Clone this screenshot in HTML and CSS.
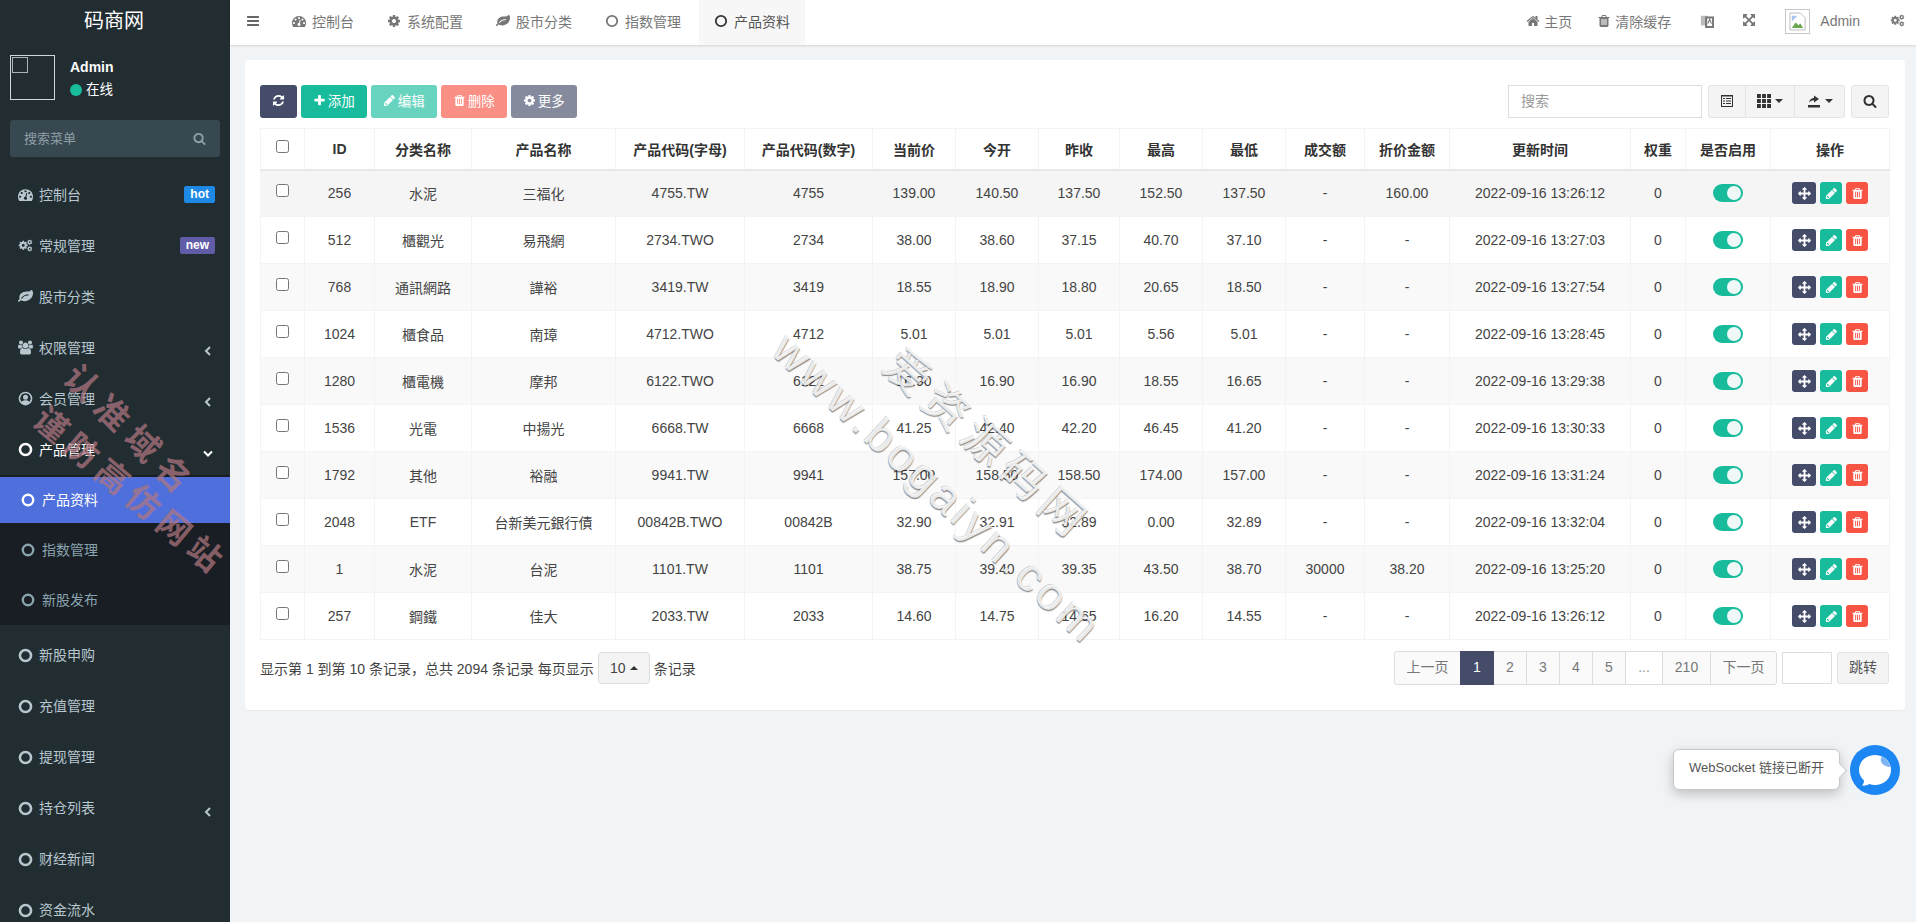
FILE: index.html
```html
<!DOCTYPE html>
<html lang="zh-CN">
<head>
    <meta charset="UTF-8">
    <title>产品资料</title>
    <link rel="stylesheet" href="styles.css">
</head>
<body>

<svg class="defs" xmlns="http://www.w3.org/2000/svg">
    <symbol id="i-bars" viewBox="0 0 1792 1792"><path d="M1664 1344v128q0 26-19 45t-45 19h-1408q-26 0-45-19t-19-45v-128q0-26 19-45t45-19h1408q26 0 45 19t19 45zm0-512v128q0 26-19 45t-45 19h-1408q-26 0-45-19t-19-45v-128q0-26 19-45t45-19h1408q26 0 45 19t19 45zm0-512v128q0 26-19 45t-45 19h-1408q-26 0-45-19t-19-45v-128q0-26 19-45t45-19h1408q26 0 45 19t19 45z"/></symbol>
    <symbol id="i-plus" viewBox="0 0 1792 1792"><path d="M1600 736v192q0 40-28 68t-68 28h-416v416q0 40-28 68t-68 28h-192q-40 0-68-28t-28-68v-416h-416q-40 0-68-28t-28-68v-192q0-40 28-68t68-28h416v-416q0-40 28-68t68-28h192q40 0 68 28t28 68v416h416q40 0 68 28t28 68z"/></symbol>
    <symbol id="i-pencil" viewBox="0 0 1792 1792"><path d="M491 1536l91-91-235-235-91 91v107h128v128h107zm469-1120l416 416-832 832h-416v-416zm683 96q0 53-37 90l-166 166-416-416 166-165q36-38 90-38 53 0 91 38l235 234q37 39 37 91z"/></symbol>
    <symbol id="i-trash" viewBox="0 0 1792 1792"><path d="M704 1376v-704q0-14-9-23t-23-9h-64q-14 0-23 9t-9 23v704q0 14 9 23t23 9h64q14 0 23-9t9-23zm256 0v-704q0-14-9-23t-23-9h-64q-14 0-23 9t-9 23v704q0 14 9 23t23 9h64q14 0 23-9t9-23zm256 0v-704q0-14-9-23t-23-9h-64q-14 0-23 9t-9 23v704q0 14 9 23t23 9h64q14 0 23-9t9-23zm-544-992h448l-48-117q-7-9-17-11h-317q-10 2-17 11zm928 32v64q0 14-9 23t-23 9h-96v948q0 83-47 143.500t-113 60.500h-832q-66 0-113-58.500t-47-141.500v-952h-96q-14 0-23-9t-9-23v-64q0-14 9-23t23-9h309l70-167q15-37 54-63t79-26h320q40 0 79 26t54 63l70 167h309q14 0 23 9t9 23z"/></symbol>
    <symbol id="i-search" viewBox="0 0 1792 1792"><path d="M1216 832q0-185-131.500-316.500t-316.500-131.500-316.500 131.500-131.500 316.500 131.500 316.500 316.500 131.500 316.500-131.500 131.500-316.500zm512 832q0 52-38 90t-90 38q-54 0-90-38l-343-342q-179 124-399 124-143 0-273.500-55.500t-225-150-150-225-55.500-273.500 55.500-273.500 150-225 225-150 273.500-55.500 273.500 55.500 225 150 150 225 55.500 273.500q0 220-124 399l343 343q37 37 37 90z"/></symbol>
    <symbol id="i-home" viewBox="0 0 1792 1792"><path d="M1472 992v480q0 26-19 45t-45 19h-384v-384h-256v384h-384q-26 0-45-19t-19-45v-480q0-1 .5-3t.5-3l575-474 575 474q1 2 1 6zm223-69l-62 74q-8 9-21 11h-3q-13 0-21-7l-692-577-692 577q-12 8-24 7-13-2-21-11l-62-74q-8-10-7-23.500t11-21.500l719-599q32-26 76-26t76 26l244 204v-195q0-14 9-23t23-9h192q14 0 23 9t9 23v408l219 182q10 8 11 21.500t-7 23.500z"/></symbol>
    <symbol id="i-cog" viewBox="0 0 1792 1792"><path d="M1152 896q0-106-75-181t-181-75-181 75-75 181 75 181 181 75 181-75 75-181zm512-109v222q0 12-8 23t-20 13l-185 28q-19 54-39 91 35 50 107 138 10 12 10 25t-9 23q-27 37-99 108t-94 71q-12 0-26-9l-138-108q-44 23-91 38-16 136-29 186-7 28-36 28h-222q-14 0-24.500-8.500t-11.500-21.500l-28-184q-49-16-90-37l-141 107q-10 9-25 9-14 0-25-11-126-114-165-168-7-10-7-23 0-12 8-23 15-21 51-66.500t54-70.500q-27-50-41-99l-183-27q-13-2-21-12.500t-8-23.500v-222q0-12 8-23t19-13l186-28q14-46 39-92-40-57-107-138-10-12-10-24 0-10 9-23 26-36 98.500-107.500t94.500-71.500q13 0 26 10l138 107q44-23 91-38 16-136 29-186 7-28 36-28h222q14 0 24.500 8.500t11.500 21.500l28 184q49 16 90 37l142-107q9-9 24-9 13 0 25 10 129 119 165 170 7 8 7 22 0 12-8 23-15 21-51 66.500t-54 70.500q26 50 41 98l183 28q13 2 21 12.500t8 23.500z"/></symbol>
    <symbol id="i-cogs" viewBox="0 0 1792 1792">
        <use href="#i-cog" x="0" y="250" width="1250" height="1250"/>
        <use href="#i-cog" x="1050" y="150" width="700" height="700"/>
        <use href="#i-cog" x="1050" y="950" width="700" height="700"/>
    </symbol>
    <symbol id="i-refresh" viewBox="0 0 1792 1792"><path d="M1639 1056q0 5-1 7-64 268-268 434.500t-478 166.500q-146 0-282.500-55t-243.500-157l-129 129q-19 19-45 19t-45-19-19-45v-448q0-26 19-45t45-19h448q26 0 45 19t19 45-19 45l-137 137q71 66 161 102t187 36q134 0 250-65t186-179q11-17 53-117 8-23 30-23h192q13 0 22.500 9.500t9.500 22.500zm25-800v448q0 26-19 45t-45 19h-448q-26 0-45-19t-19-45 19-45l138-138q-148-137-349-137-134 0-250 65t-186 179q-11 17-53 117-8 23-30 23h-199q-13 0-22.500-9.500t-9.500-22.500v-7q65-268 270-434.500t480-166.500q146 0 284 55.500t245 156.500l130-129q19-19 45-19t45 19 19 45z"/></symbol>
    <symbol id="i-move" viewBox="0 0 1792 1792"><path d="M1792 896q0 26-19 45l-256 256q-19 19-45 19t-45-19-19-45v-128h-384v384h128q26 0 45 19t19 45-19 45l-256 256q-19 19-45 19t-45-19l-256-256q-19-19-19-45t19-45 45-19h128v-384h-384v128q0 26-19 45t-45 19-45-19l-256-256q-19-19-19-45t19-45l256-256q19-19 45-19t45 19 19 45v128h384v-384h-128q-26 0-45-19t-19-45 19-45l256-256q19-19 45-19t45 19l256 256q19 19 19 45t-19 45-45 19h-128v384h384v-128q0-26 19-45t45-19 45 19l256 256q19 19 19 45z"/></symbol>
    <symbol id="i-expand" viewBox="0 0 1792 1792"><path d="M1283 413l-355 355 355 355 144-144q29-31 70-14 39 17 39 59v448q0 26-19 45t-45 19h-448q-42 0-59-40-17-39 14-69l144-144-355-355-355 355 144 144q31 30 14 69-17 40-59 40h-448q-26 0-45-19t-19-45v-448q0-42 40-59 39-17 69 14l144 144 355-355-355-355-144 144q-19 19-45 19-12 0-24-5-40-17-40-59v-448q0-26 19-45t45-19h448q42 0 59 40 17 39-14 69l-144 144 355 355 355-355-144-144q-31-30-14-69 17-40 59-40h448q26 0 45 19t19 45v448q0 42-39 59-13 5-25 5-26 0-45-19z"/></symbol>
    <symbol id="i-dash" viewBox="0 0 1792 1792"><path d="M384 1152q0-53-37.500-90.500t-90.500-37.500-90.500 37.500-37.500 90.500 37.500 90.500 90.500 37.500 90.500-37.500 37.500-90.500zm192-448q0-53-37.500-90.500t-90.500-37.500-90.500 37.500-37.500 90.500 37.500 90.500 90.500 37.500 90.500-37.500 37.500-90.500zm428 481l101-382q6-26-7.500-48.500t-38.500-29.500-48 6.500-30 39.500l-101 382q-60 5-107 43.500t-63 98.500q-20 77 20 146t117 89 146-20 89-117q16-60-6-117t-72-91zm660-33q0-53-37.500-90.500t-90.500-37.500-90.500 37.500-37.500 90.500 37.500 90.500 90.500 37.500 90.500-37.500 37.500-90.500zm-640-640q0-53-37.500-90.500t-90.500-37.500-90.500 37.500-37.500 90.500 37.500 90.500 90.500 37.500 90.500-37.500 37.500-90.500zm448 192q0-53-37.500-90.500t-90.500-37.500-90.500 37.500-37.500 90.500 37.500 90.500 90.500 37.500 90.500-37.500 37.500-90.500zm320 448q0 261-141 483-19 29-54 29h-1402q-35 0-54-29-141-221-141-483 0-182 71-348t191-286 286-191 348-71 348 71 286 191 191 286 71 348z"/></symbol>
    <symbol id="i-leaf" viewBox="0 0 1792 1792"><path d="M1280 704q0-26-19-45t-45-19q-172 0-318 49.500t-259.500 134-235.500 219.500q-19 21-19 45 0 26 19 45t45 19q24 0 45-19 27-24 74-71t67-66q137-124 268.500-176t313.500-52q26 0 45-19t19-45zm512-198q0 95-20 193-46 224-184.500 383t-357.500 268q-214 108-438 108-148 0-286-47-15-5-88-42t-96-37q-16 0-39.500 32t-45 70-52.500 70-60 32q-30 0-51-11t-31-24-27-42q-2-4-6-11t-5.500-10-3-9.500-1.500-13.500q0-35 31-73.500t68-65.500 68-56 31-48q0-4-14-38t-16-44q-9-51-9-104 0-115 43.500-220t119-184.500 170.500-139 204-95.500q55-18 145-25.500t179.500-9 178.500-6 163.500-24 113.500-56.500l29.500-29.500 29.500-28 27-20 36.500-16 43.500-4.500q39 0 70.500 46t47.500 112 24 124 8 96z"/></symbol>
    <symbol id="i-users" viewBox="0 0 1920 1792"><path d="M593 896q-162 5-265 128h-134q-82 0-138-40.500t-56-118.500q0-353 124-353 6 0 43.500 21t97.500 42.500 119 21.500q67 0 133-23-5 37-5 66 0 139 81 256zm1071 637q0 120-73 189.500t-194 69.500h-874q-121 0-194-69.500t-73-189.500q0-53 3.500-103.500t14-109 26.500-108.500 43-97.500 62-81 85.500-53.500 111.500-20q10 0 43 21.500t73 48 107 48 135 21.500 135-21.500 107-48 73-48 43-21.500q61 0 111.500 20t85.500 53.500 62 81 43 97.500 26.500 108.500 14 109 3.500 103.500zm-1024-1277q0 106-75 181t-181 75-181-75-75-181 75-181 181-75 181 75 75 181zm704 384q0 159-112.500 271.500t-271.500 112.500-271.500-112.500-112.500-271.500 112.500-271.500 271.500-112.500 271.500 112.500 112.500 271.500zm576 225q0 78-56 118.500t-138 40.500h-134q-103-123-265-128 81-117 81-256 0-29-5-66 66 23 133 23 59 0 119-21.500t97.500-42.500 43.500-21q124 0 124 353zm-128-609q0 106-75 181t-181 75-181-75-75-181 75-181 181-75 181 75 75 181z"/></symbol>
    <symbol id="i-user" viewBox="0 0 24 24"><path fill-rule="evenodd" d="M12 1a11 11 0 1 0 0 22 11 11 0 0 0 0-22zm0 2.500a8.500 8.500 0 0 1 6.700 13.700c-1.500-1.700-3.900-2.600-6.700-2.600s-5.200.9-6.700 2.600A8.500 8.500 0 0 1 12 3.500zm0 2.500a4 4 0 1 0 0 8 4 4 0 0 0 0-8z"/></symbol>
    <symbol id="i-circle" viewBox="0 0 14 14"><circle cx="7" cy="7" r="5.200" fill="none" stroke="currentColor"/></symbol>
    <symbol id="i-left" viewBox="0 0 10 14"><path d="M7 3L3 7l4 4" fill="none" stroke="currentColor" stroke-width="2"/></symbol>
    <symbol id="i-down" viewBox="0 0 14 10"><path d="M3 2.500l4 4 4-4" fill="none" stroke="currentColor" stroke-width="2"/></symbol>
    <symbol id="i-lang" viewBox="0 0 16 16"><path d="M1 2h8v11H1z" opacity=".5"/><path d="M7 4h8v11H7z" fill="#fff" stroke="currentColor"/><path d="M9 11l2-5 2 5" fill="none" stroke="currentColor" stroke-width="1.300"/></symbol>
    <symbol id="i-list" viewBox="0 0 14 14"><path fill-rule="evenodd" d="M1 1h12v12H1zm1 1.500v9.500h10V2.500zM3 4h2v1H3zm3 0h5v1H6zM3 6.500h2v1H3zm3 0h5v1H6zM3 9h2v1H3zm3 0h5v1H6z"/></symbol>
    <symbol id="i-th" viewBox="0 0 13 13"><path d="M0 0h3.600v3.600H0zm4.700 0h3.600v3.600H4.700zm4.700 0H13v3.600H9.400zM0 4.700h3.600v3.600H0zm4.700 0h3.600v3.600H4.700zm4.700 0H13v3.600H9.400zM0 9.400h3.600V13H0zm4.700 0h3.600V13H4.700zm4.700 0H13V13H9.400z"/></symbol>
    <symbol id="i-export" viewBox="0 0 14 14"><path d="M1 11h12v2.500H1zM2 8.500C2.500 5.500 4.500 4 7 4V1.500L12 5 7 8.500V6.300C5 6.300 3.500 7 2 8.500z"/></symbol>
</svg>

<aside class="sidebar">
    <div class="logo">码商网</div>
    <div class="user-panel">
        <div class="user-pic"><span></span></div>
        <div class="user-info">
            <b>Admin</b>
            <div class="user-status"><i></i>在线</div>
        </div>
    </div>
    <div class="side-search">
        <span>搜索菜单</span>
        <svg class="ic"><use href="#i-search"/></svg>
    </div>
    <ul class="side-menu">
        <li class="side-item"><svg class="ic"><use href="#i-dash"/></svg><span>控制台</span><em class="badge badge-hot">hot</em></li>
        <li class="side-item"><svg class="ic"><use href="#i-cogs"/></svg><span>常规管理</span><em class="badge badge-new">new</em></li>
        <li class="side-item"><svg class="ic"><use href="#i-leaf"/></svg><span>股市分类</span></li>
        <li class="side-item"><svg class="ic"><use href="#i-users"/></svg><span>权限管理</span><svg class="arrow"><use href="#i-left"/></svg></li>
        <li class="side-item"><svg class="ic"><use href="#i-user"/></svg><span>会员管理</span><svg class="arrow"><use href="#i-left"/></svg></li>
        <li class="side-item open"><svg class="ic"><use href="#i-circle"/></svg><span>产品管理</span><svg class="arrow"><use href="#i-down"/></svg></li>
        <li>
            <ul class="sub-menu">
                <li class="sub-item active"><svg class="ic"><use href="#i-circle"/></svg><span>产品资料</span></li>
                <li class="sub-item"><svg class="ic"><use href="#i-circle"/></svg><span>指数管理</span></li>
                <li class="sub-item"><svg class="ic"><use href="#i-circle"/></svg><span>新股发布</span></li>
            </ul>
        </li>
        <li class="side-item"><svg class="ic"><use href="#i-circle"/></svg><span>新股申购</span></li>
        <li class="side-item"><svg class="ic"><use href="#i-circle"/></svg><span>充值管理</span></li>
        <li class="side-item"><svg class="ic"><use href="#i-circle"/></svg><span>提现管理</span></li>
        <li class="side-item"><svg class="ic"><use href="#i-circle"/></svg><span>持仓列表</span><svg class="arrow"><use href="#i-left"/></svg></li>
        <li class="side-item"><svg class="ic"><use href="#i-circle"/></svg><span>财经新闻</span></li>
        <li class="side-item"><svg class="ic"><use href="#i-circle"/></svg><span>资金流水</span></li>
    </ul>
</aside>

<div class="main">
    <header class="topbar">
        <svg class="ic burger"><use href="#i-bars"/></svg>
        <div class="tabs">
            <div class="tab"><svg class="ic"><use href="#i-dash"/></svg>控制台</div>
            <div class="tab"><svg class="ic"><use href="#i-cog"/></svg>系统配置</div>
            <div class="tab"><svg class="ic"><use href="#i-leaf"/></svg>股市分类</div>
            <div class="tab"><svg class="ic"><use href="#i-circle"/></svg>指数管理</div>
            <div class="tab current"><svg class="ic"><use href="#i-circle"/></svg>产品资料</div>
        </div>
        <div class="top-right">
            <div class="top-link link-home"><svg class="ic"><use href="#i-home"/></svg>主页</div>
            <div class="top-link link-clear"><svg class="ic"><use href="#i-trash"/></svg>清除缓存</div>
            <svg class="ic top-icon"><use href="#i-lang"/></svg>
            <svg class="ic top-icon icon-expand"><use href="#i-expand"/></svg>
            <div class="top-avatar">
                <svg viewBox="0 0 18 20"><path d="M1 1h11l5 5v13H1z" fill="#fff" stroke="#bbb"/><path d="M3 17l4-6 3 3 2-2 3 5z" fill="#6aa84f"/><path d="M3 10V4h6z" fill="#a9c4ee"/></svg>
            </div>
            <div class="top-name">Admin</div>
            <svg class="ic top-gear"><use href="#i-cogs"/></svg>
        </div>
    </header>

    <div class="content">
        <div class="panel">
            <div class="toolbar">
                <button class="btn btn-dark btn-icon"><svg class="ic"><use href="#i-refresh"/></svg></button>
                <button class="btn btn-green"><svg class="ic"><use href="#i-plus"/></svg>添加</button>
                <button class="btn btn-green faded"><svg class="ic"><use href="#i-pencil"/></svg>编辑</button>
                <button class="btn btn-red faded"><svg class="ic"><use href="#i-trash"/></svg>删除</button>
                <button class="btn btn-dark faded"><svg class="ic"><use href="#i-cog"/></svg>更多</button>
                <div class="toolbar-right">
                    <div class="search-input">搜索</div>
                    <div class="btn-group">
                        <button class="tool tool-list"><svg class="ic"><use href="#i-list"/></svg></button>
                        <button class="tool tool-th"><svg class="ic"><use href="#i-th"/></svg><i class="caret"></i></button>
                        <button class="tool tool-exp"><svg class="ic"><use href="#i-export"/></svg><i class="caret"></i></button>
                    </div>
                    <button class="tool tool-search"><svg class="ic"><use href="#i-search"/></svg></button>
                </div>
            </div>

            <table class="grid">
                <colgroup>
                    <col class="c-check"><col class="c-id"><col class="c-cat"><col class="c-name"><col class="c-code"><col class="c-num">
                    <col class="c-p1"><col class="c-p2"><col class="c-p3"><col class="c-p1"><col class="c-p1"><col class="c-vol"><col class="c-disc">
                    <col class="c-time"><col class="c-weight"><col class="c-on"><col class="c-act">
                </colgroup>
                <thead>
                    <tr>
                        <th><input type="checkbox"></th><th>ID</th><th>分类名称</th><th>产品名称</th><th>产品代码(字母)</th><th>产品代码(数字)</th>
                        <th>当前价</th><th>今开</th><th>昨收</th><th>最高</th><th>最低</th><th>成交额</th><th>折价金额</th><th>更新时间</th><th>权重</th><th>是否启用</th><th>操作</th>
                    </tr>
                </thead>
                <tbody>
                    <tr class="hover">
                        <td><input type="checkbox"></td><td>256</td><td>水泥</td><td>三福化</td><td>4755.TW</td><td>4755</td>
                        <td>139.00</td><td>140.50</td><td>137.50</td><td>152.50</td><td>137.50</td><td>-</td><td>160.00</td><td>2022-09-16 13:26:12</td><td>0</td>
                        <td><span class="switch"></span></td>
                        <td><div class="acts"><span class="act act-move"><svg><use href="#i-move"/></svg></span><span class="act act-edit"><svg><use href="#i-pencil"/></svg></span><span class="act act-del"><svg><use href="#i-trash"/></svg></span></div></td>
                    </tr>
                    <tr>
                        <td><input type="checkbox"></td><td>512</td><td>櫃觀光</td><td>易飛網</td><td>2734.TWO</td><td>2734</td>
                        <td>38.00</td><td>38.60</td><td>37.15</td><td>40.70</td><td>37.10</td><td>-</td><td>-</td><td>2022-09-16 13:27:03</td><td>0</td>
                        <td><span class="switch"></span></td>
                        <td><div class="acts"><span class="act act-move"><svg><use href="#i-move"/></svg></span><span class="act act-edit"><svg><use href="#i-pencil"/></svg></span><span class="act act-del"><svg><use href="#i-trash"/></svg></span></div></td>
                    </tr>
                    <tr>
                        <td><input type="checkbox"></td><td>768</td><td>通訊網路</td><td>譁裕</td><td>3419.TW</td><td>3419</td>
                        <td>18.55</td><td>18.90</td><td>18.80</td><td>20.65</td><td>18.50</td><td>-</td><td>-</td><td>2022-09-16 13:27:54</td><td>0</td>
                        <td><span class="switch"></span></td>
                        <td><div class="acts"><span class="act act-move"><svg><use href="#i-move"/></svg></span><span class="act act-edit"><svg><use href="#i-pencil"/></svg></span><span class="act act-del"><svg><use href="#i-trash"/></svg></span></div></td>
                    </tr>
                    <tr>
                        <td><input type="checkbox"></td><td>1024</td><td>櫃食品</td><td>南璋</td><td>4712.TWO</td><td>4712</td>
                        <td>5.01</td><td>5.01</td><td>5.01</td><td>5.56</td><td>5.01</td><td>-</td><td>-</td><td>2022-09-16 13:28:45</td><td>0</td>
                        <td><span class="switch"></span></td>
                        <td><div class="acts"><span class="act act-move"><svg><use href="#i-move"/></svg></span><span class="act act-edit"><svg><use href="#i-pencil"/></svg></span><span class="act act-del"><svg><use href="#i-trash"/></svg></span></div></td>
                    </tr>
                    <tr>
                        <td><input type="checkbox"></td><td>1280</td><td>櫃電機</td><td>摩邦</td><td>6122.TWO</td><td>6122</td>
                        <td>16.90</td><td>16.90</td><td>16.90</td><td>18.55</td><td>16.65</td><td>-</td><td>-</td><td>2022-09-16 13:29:38</td><td>0</td>
                        <td><span class="switch"></span></td>
                        <td><div class="acts"><span class="act act-move"><svg><use href="#i-move"/></svg></span><span class="act act-edit"><svg><use href="#i-pencil"/></svg></span><span class="act act-del"><svg><use href="#i-trash"/></svg></span></div></td>
                    </tr>
                    <tr>
                        <td><input type="checkbox"></td><td>1536</td><td>光電</td><td>中揚光</td><td>6668.TW</td><td>6668</td>
                        <td>41.25</td><td>42.40</td><td>42.20</td><td>46.45</td><td>41.20</td><td>-</td><td>-</td><td>2022-09-16 13:30:33</td><td>0</td>
                        <td><span class="switch"></span></td>
                        <td><div class="acts"><span class="act act-move"><svg><use href="#i-move"/></svg></span><span class="act act-edit"><svg><use href="#i-pencil"/></svg></span><span class="act act-del"><svg><use href="#i-trash"/></svg></span></div></td>
                    </tr>
                    <tr>
                        <td><input type="checkbox"></td><td>1792</td><td>其他</td><td>裕融</td><td>9941.TW</td><td>9941</td>
                        <td>157.00</td><td>158.50</td><td>158.50</td><td>174.00</td><td>157.00</td><td>-</td><td>-</td><td>2022-09-16 13:31:24</td><td>0</td>
                        <td><span class="switch"></span></td>
                        <td><div class="acts"><span class="act act-move"><svg><use href="#i-move"/></svg></span><span class="act act-edit"><svg><use href="#i-pencil"/></svg></span><span class="act act-del"><svg><use href="#i-trash"/></svg></span></div></td>
                    </tr>
                    <tr>
                        <td><input type="checkbox"></td><td>2048</td><td>ETF</td><td>台新美元銀行債</td><td>00842B.TWO</td><td>00842B</td>
                        <td>32.90</td><td>32.91</td><td>32.89</td><td>0.00</td><td>32.89</td><td>-</td><td>-</td><td>2022-09-16 13:32:04</td><td>0</td>
                        <td><span class="switch"></span></td>
                        <td><div class="acts"><span class="act act-move"><svg><use href="#i-move"/></svg></span><span class="act act-edit"><svg><use href="#i-pencil"/></svg></span><span class="act act-del"><svg><use href="#i-trash"/></svg></span></div></td>
                    </tr>
                    <tr>
                        <td><input type="checkbox"></td><td>1</td><td>水泥</td><td>台泥</td><td>1101.TW</td><td>1101</td>
                        <td>38.75</td><td>39.40</td><td>39.35</td><td>43.50</td><td>38.70</td><td>30000</td><td>38.20</td><td>2022-09-16 13:25:20</td><td>0</td>
                        <td><span class="switch"></span></td>
                        <td><div class="acts"><span class="act act-move"><svg><use href="#i-move"/></svg></span><span class="act act-edit"><svg><use href="#i-pencil"/></svg></span><span class="act act-del"><svg><use href="#i-trash"/></svg></span></div></td>
                    </tr>
                    <tr>
                        <td><input type="checkbox"></td><td>257</td><td>鋼鐵</td><td>佳大</td><td>2033.TW</td><td>2033</td>
                        <td>14.60</td><td>14.75</td><td>14.65</td><td>16.20</td><td>14.55</td><td>-</td><td>-</td><td>2022-09-16 13:26:12</td><td>0</td>
                        <td><span class="switch"></span></td>
                        <td><div class="acts"><span class="act act-move"><svg><use href="#i-move"/></svg></span><span class="act act-edit"><svg><use href="#i-pencil"/></svg></span><span class="act act-del"><svg><use href="#i-trash"/></svg></span></div></td>
                    </tr>
                </tbody>
            </table>

            <div class="table-foot">
                <div class="foot-info">
                    显示第 1 到第 10 条记录，总共 2094 条记录 每页显示
                    <span class="page-size">10<i class="caret-up"></i></span>
                    条记录
                </div>
                <div class="foot-pages">
                    <ul class="pager">
                        <li class="p-word">上一页</li>
                        <li class="p-on">1</li>
                        <li>2</li>
                        <li>3</li>
                        <li>4</li>
                        <li>5</li>
                        <li class="p-dots">...</li>
                        <li class="p-last">210</li>
                        <li class="p-word">下一页</li>
                    </ul>
                    <div class="jump-input"></div>
                    <div class="jump-btn">跳转</div>
                </div>
            </div>
        </div>
    </div>
</div>

<!-- floating stuff over the page -->
<div class="ws-tip">WebSocket 链接已断开</div>
<div class="ws-ball">
    <svg viewBox="0 0 50 50">
        <circle cx="25" cy="25" r="25" fill="#1c86f2"/>
        <path d="M25 10c9 0 16 6.500 16 15s-7 15-16 15c-2 0-4-.3-5.800-1-1.700 1.300-4.500 2-7.200 1.500 1.300-1.300 2-3 2-5-3-2.700-5-6.300-5-10.500 0-8.500 7-15 16-15z" fill="#fff"/>
        <path d="M32 11.500c-1.200 1.200-1.500 3-1 5 .8 2.500 4 5 8 5.500 .6-.3 1.200-.3 1.500-.3-1-4.600-4.300-8.300-8.500-10.200z" fill="#7fb4f3"/>
    </svg>
</div>

<div class="mark mark-a">认准域名</div>
<div class="mark mark-b">谨防高仿网站</div>
<div class="mark mark-url">www.bogaiyn.com</div>
<div class="mark mark-name">爱资源码网</div>

</body>
</html>
```

FILE: styles.css
```css
* {
    box-sizing: border-box;
}
html, body {
    height: 100%;
}
body {
    margin: 0;
    display: flex;
    height: 922px;
    overflow: hidden;
    position: relative;
    background: #f1f4f6;
    color: #444;
    font-family: "Liberation Sans", "Noto Sans CJK SC", sans-serif;
    font-size: 14px;
}
ul {
    list-style: none;
    margin: 0;
    padding: 0;
}
.defs {
    display: none;
}
.ic {
    width: 14px;
    height: 14px;
    fill: currentColor;
    flex: none;
    stroke-width: 2.400;
}

/* sidebar */
.sidebar {
    width: 230px;
    flex: none;
    height: 922px;
    overflow: hidden;
    background: #222d32;
    color: #b8c7ce;
}
.logo {
    height: 45px;
    padding-top: 6px;
    line-height: 30px;
    text-align: center;
    color: #fff;
    font-size: 20px;
    margin-left: -2px;
}
.user-panel {
    display: flex;
    padding: 10px 10px 0;
    height: 65px;
}
.user-pic {
    width: 45px;
    height: 45px;
    border: 1px solid #d2d6d8;
    padding: 1px;
}
.user-pic span {
    display: block;
    width: 16px;
    height: 16px;
    border: 1px solid #aab2b5;
}
.user-info {
    margin-left: 15px;
    color: #fff;
    padding-top: 2px;
    line-height: 20px;
}
.user-status {
    display: flex;
    align-items: center;
    margin-top: 3px;
    font-size: 13.500px;
}
.user-status i {
    width: 12px;
    height: 12px;
    border-radius: 50%;
    background: #18bc9c;
    margin-right: 4px;
}
.side-search {
    margin: 10px 10px 0;
    height: 37px;
    display: flex;
    align-items: center;
    justify-content: space-between;
    padding: 0 14px;
    background: #374850;
    border-radius: 3px;
    color: #8f9fa6;
    font-size: 13px;
}
.side-search span {
    padding-bottom: 2px;
}
.side-search .ic {
    width: 13px;
    height: 13px;
}
.side-menu {
    margin-top: 12px;
}
.side-item {
    height: 51px;
    display: flex;
    align-items: center;
    padding: 0 15px 0 18px;
    position: relative;
}
.side-item span, .sub-item span {
    padding-bottom: 2px;
}
.side-item .ic {
    width: 15px;
    height: 15px;
    margin-right: 6px;
}
.side-item.open {
    color: #fff;
}
.badge {
    margin-left: auto;
    font-style: normal;
    font-weight: bold;
    font-size: 12px;
    color: #fff;
    height: 17px;
    line-height: 17px;
    padding: 0 6px;
    border-radius: 2px;
}
.badge-hot {
    background: #1e88e5;
}
.badge-new {
    background: #605ca8;
}
.arrow {
    position: absolute;
    right: 17px;
    top: 22px;
    width: 10px;
    height: 14px;
}
.side-item.open .arrow {
    right: 15px;
    width: 14px;
    height: 10px;
    top: 25px;
}
.sub-menu {
    background: #181e23;
    padding-top: 1px;
    margin-bottom: 4.500px;
}
.sub-item {
    height: 50px;
    display: flex;
    align-items: center;
    padding-left: 21px;
    color: #8aa4af;
}
.sub-item .ic {
    width: 14px;
    height: 14px;
    margin-right: 7px;
}
.sub-item.active {
    height: 46px;
    margin: 1px 0 2px;
    background: #4e6fdc;
    color: #fff;
}

/* top bar */
.main {
    flex: 1;
    min-width: 0;
}
.topbar {
    height: 45px;
    padding-bottom: 4px;
    background: #fff;
    display: flex;
    align-items: center;
    box-shadow: 0 1px 2px rgba(0, 0, 0, 0.12);
    position: relative;
    color: #777;
}
.burger {
    margin-left: 16px;
    margin-right: 17px;
    color: #666;
}
.tabs {
    display: flex;
    gap: 3px;
    height: 45px;
    align-self: flex-start;
}
.tab {
    display: flex;
    align-items: center;
    padding: 0 15px 4px;
}
.tab .ic {
    margin-right: 6px;
    stroke-width: 1.800;
}
.tab.current {
    background: #f7f7f7;
    color: #555;
}
.tab.current .ic {
    color: #333;
}
.top-right {
    margin-left: auto;
    display: flex;
    align-items: center;
    padding-right: 11px;
}
.top-link {
    display: flex;
    align-items: center;
}
.top-link .ic {
    margin-right: 4px;
}
.link-clear {
    margin-left: 25px;
}
.top-icon {
    margin-left: 29px;
}
.icon-expand {
    margin-left: 29px;
}
.top-avatar {
    width: 25px;
    height: 25px;
    margin-left: 28px;
    margin-top: 2px;
    border: 1px solid #c4c8ca;
    padding: 2px 3px;
}
.top-avatar svg {
    display: block;
    width: 17px;
    height: 19px;
}
.top-name {
    margin-left: 10px;
    color: #777;
}
.top-gear {
    margin-left: 30px;
    width: 15px;
    height: 15px;
}

/* panel */
.content {
    padding: 15px 11px 15px 15px;
}
.panel {
    background: #fff;
    border-radius: 4px;
    height: 650px;
    padding: 25px 16px 0 15px;
    box-shadow: 0 1px 1px rgba(0, 0, 0, 0.04);
}
.toolbar {
    display: flex;
    height: 33px;
    gap: 3.500px;
    margin-bottom: 10px;
}
.btn {
    border: 0;
    border-radius: 3px;
    height: 33px;
    width: 66.500px;
    color: #fff;
    font: inherit;
    font-size: 13.500px;
    display: flex;
    align-items: center;
    justify-content: center;
    padding: 0 0 3px;
}
.btn .ic {
    width: 13px;
    height: 13px;
    margin-right: 2px;
}
.btn-icon {
    width: 37px;
}
.btn-icon .ic {
    margin: 0;
}
.btn-dark {
    background: #444c69;
}
.btn-green {
    background: #18bc9c;
}
.btn-red {
    background: #f75444;
}
.faded {
    opacity: 0.65;
}
.toolbar-right {
    margin-left: auto;
    display: flex;
    gap: 6px;
}
.search-input {
    width: 194px;
    height: 33px;
    line-height: 31px;
    border: 1px solid #ddd;
    padding-left: 12px;
    color: #999;
}
.btn-group {
    display: flex;
}
.tool {
    height: 33px;
    background: #f4f4f4;
    border: 1px solid #e4e4e4;
    color: #333;
    padding: 0 0 2px;
    display: flex;
    align-items: center;
    justify-content: center;
}
.tool-list {
    width: 38px;
    border-radius: 3px 0 0 3px;
}
.tool-th {
    width: 49px;
    border-left: 0;
}
.tool-exp {
    width: 50px;
    border-left: 0;
    border-radius: 0 3px 3px 0;
}
.tool-search {
    width: 38px;
    border-radius: 3px;
}
.caret {
    width: 0;
    height: 0;
    margin-left: 4px;
    border-top: 4px solid #333;
    border-left: 4px solid transparent;
    border-right: 4px solid transparent;
}

/* table */
.grid {
    width: 1629px;
    table-layout: fixed;
    border-collapse: collapse;
    color: #444;
}
.c-check { width: 44px; }
.c-id { width: 70px; }
.c-cat { width: 97px; }
.c-name { width: 144px; }
.c-code { width: 129px; }
.c-num { width: 128px; }
.c-p1 { width: 83px; }
.c-p2 { width: 83px; }
.c-p3 { width: 81px; }
.c-vol { width: 79px; }
.c-disc { width: 85px; }
.c-time { width: 181px; }
.c-weight { width: 55px; }
.c-on { width: 85px; }
.c-act { width: 119px; }
.grid th, .grid td {
    border: 1px solid #f4f4f4;
    text-align: center;
    padding: 0;
    vertical-align: middle;
    white-space: nowrap;
}
.grid th {
    height: 41px;
    color: #333;
    font-weight: bold;
    border-bottom: 2px solid #e6e8e9;
}
.grid td {
    height: 47px;
}
.grid tbody tr:nth-child(odd) {
    background: #f9f9f9;
}
.grid tbody tr.hover {
    background: #f5f5f5;
}
.grid input {
    display: block;
    margin: -5px auto 0 15px;
    width: 13px;
    height: 13px;
}
.switch {
    display: block;
    width: 30px;
    height: 18px;
    margin: 0 auto;
    border-radius: 9px;
    background: #18bc9c;
    position: relative;
}
.switch::after {
    content: "";
    position: absolute;
    right: 2px;
    top: 2px;
    width: 14px;
    height: 14px;
    border-radius: 50%;
    background: #eef8f6;
}
.acts {
    display: flex;
    justify-content: center;
    gap: 4px;
}
.act {
    width: 22px;
    height: 22px;
    border-radius: 3px;
    display: flex;
    align-items: center;
    justify-content: center;
    color: #fff;
}
.act svg {
    width: 13px;
    height: 13px;
    fill: currentColor;
}
.act-move {
    width: 24px;
    background: #444c69;
}
.act-edit {
    background: #18bc9c;
}
.act-del {
    background: #f75444;
}

/* table footer */
.table-foot {
    display: flex;
    justify-content: space-between;
    margin-top: 11px;
}
.foot-info {
    display: flex;
    align-items: center;
    gap: 4px;
    height: 34px;
    color: #444;
}
.page-size {
    width: 52px;
    height: 32px;
    display: flex;
    align-items: center;
    justify-content: center;
    background: #f4f4f4;
    border: 1px solid #ddd;
    border-radius: 3px;
    color: #444;
    font-size: 14px;
}
.caret-up {
    width: 0;
    height: 0;
    margin-left: 4px;
    border-bottom: 4px solid #333;
    border-left: 4px solid transparent;
    border-right: 4px solid transparent;
}
.foot-pages {
    display: flex;
    align-items: center;
    height: 34px;
}
.pager {
    display: flex;
    height: 34px;
    color: #777;
    border: 1px solid #ddd;
    border-radius: 3px;
    background: #fafafa;
}
.pager li {
    width: 33px;
    line-height: 30px;
    text-align: center;
    border-right: 1px solid #ddd;
}
.pager .p-word {
    width: 65px;
    border-right: 0;
}
.pager .p-on {
    width: 34px;
    margin: -1px 0;
    height: 34px;
    line-height: 32px;
    background: #444c69;
    color: #fff;
    border-right: 0;
}
.pager .p-dots {
    width: 37px;
    background: #fff;
    color: #999;
}
.pager .p-last {
    width: 48px;
}
.jump-input {
    width: 50px;
    height: 32px;
    margin-left: 5px;
    border: 1px solid #ddd;
    background: #fff;
}
.jump-btn {
    width: 52px;
    height: 32px;
    line-height: 28px;
    margin-left: 5px;
    text-align: center;
    background: #f4f4f4;
    border: 1px solid #e4e4e4;
    border-radius: 3px;
    color: #555;
}

/* websocket tip */
.ws-tip {
    position: absolute;
    left: 1673px;
    top: 749px;
    width: 167px;
    height: 41px;
    line-height: 36px;
    text-align: center;
    font-size: 13px;
    color: #555;
    background: #fff;
    border: 1px solid #c6c9cb;
    border-radius: 6px;
    box-shadow: 0 4px 12px rgba(0, 0, 0, 0.22);
}
.ws-tip::after {
    content: "";
    position: absolute;
    right: -6px;
    top: 15px;
    width: 10px;
    height: 10px;
    background: #fff;
    border-top: 1px solid #c6c9cb;
    border-right: 1px solid #c6c9cb;
    transform: rotate(45deg);
}
.ws-ball {
    position: absolute;
    left: 1850px;
    top: 745px;
    width: 50px;
    height: 50px;
}
.ws-ball svg {
    display: block;
}

/* watermarks */
.mark {
    position: absolute;
    white-space: nowrap;
    pointer-events: none;
    transform: translate(-50%, -50%) rotate(42deg);
}
.mark-a, .mark-b {
    color: rgba(176, 118, 128, 0.72);
    font-weight: bold;
}
.mark-a {
    left: 132px;
    top: 430px;
    font-size: 34px;
    letter-spacing: 9px;
    transform: translate(-50%, -50%) rotate(45deg);
}
.mark-b {
    left: 132px;
    top: 490px;
    font-size: 33px;
    letter-spacing: 7px;
    transform: translate(-50%, -50%) rotate(40deg);
}
.mark-url, .mark-name {
    color: rgba(255, 255, 255, 0.86);
    text-shadow: 1px 1px 1px rgba(0, 0, 0, 0.45), -1px 0 0 rgba(0, 0, 0, 0.18);
}
.mark-url {
    left: 938px;
    top: 488px;
    font-size: 46px;
    letter-spacing: 4px;
    transform: translate(-50%, -50%) rotate(43deg);
}
.mark-name {
    left: 990px;
    top: 442px;
    font-size: 44px;
    letter-spacing: 8px;
}
```
